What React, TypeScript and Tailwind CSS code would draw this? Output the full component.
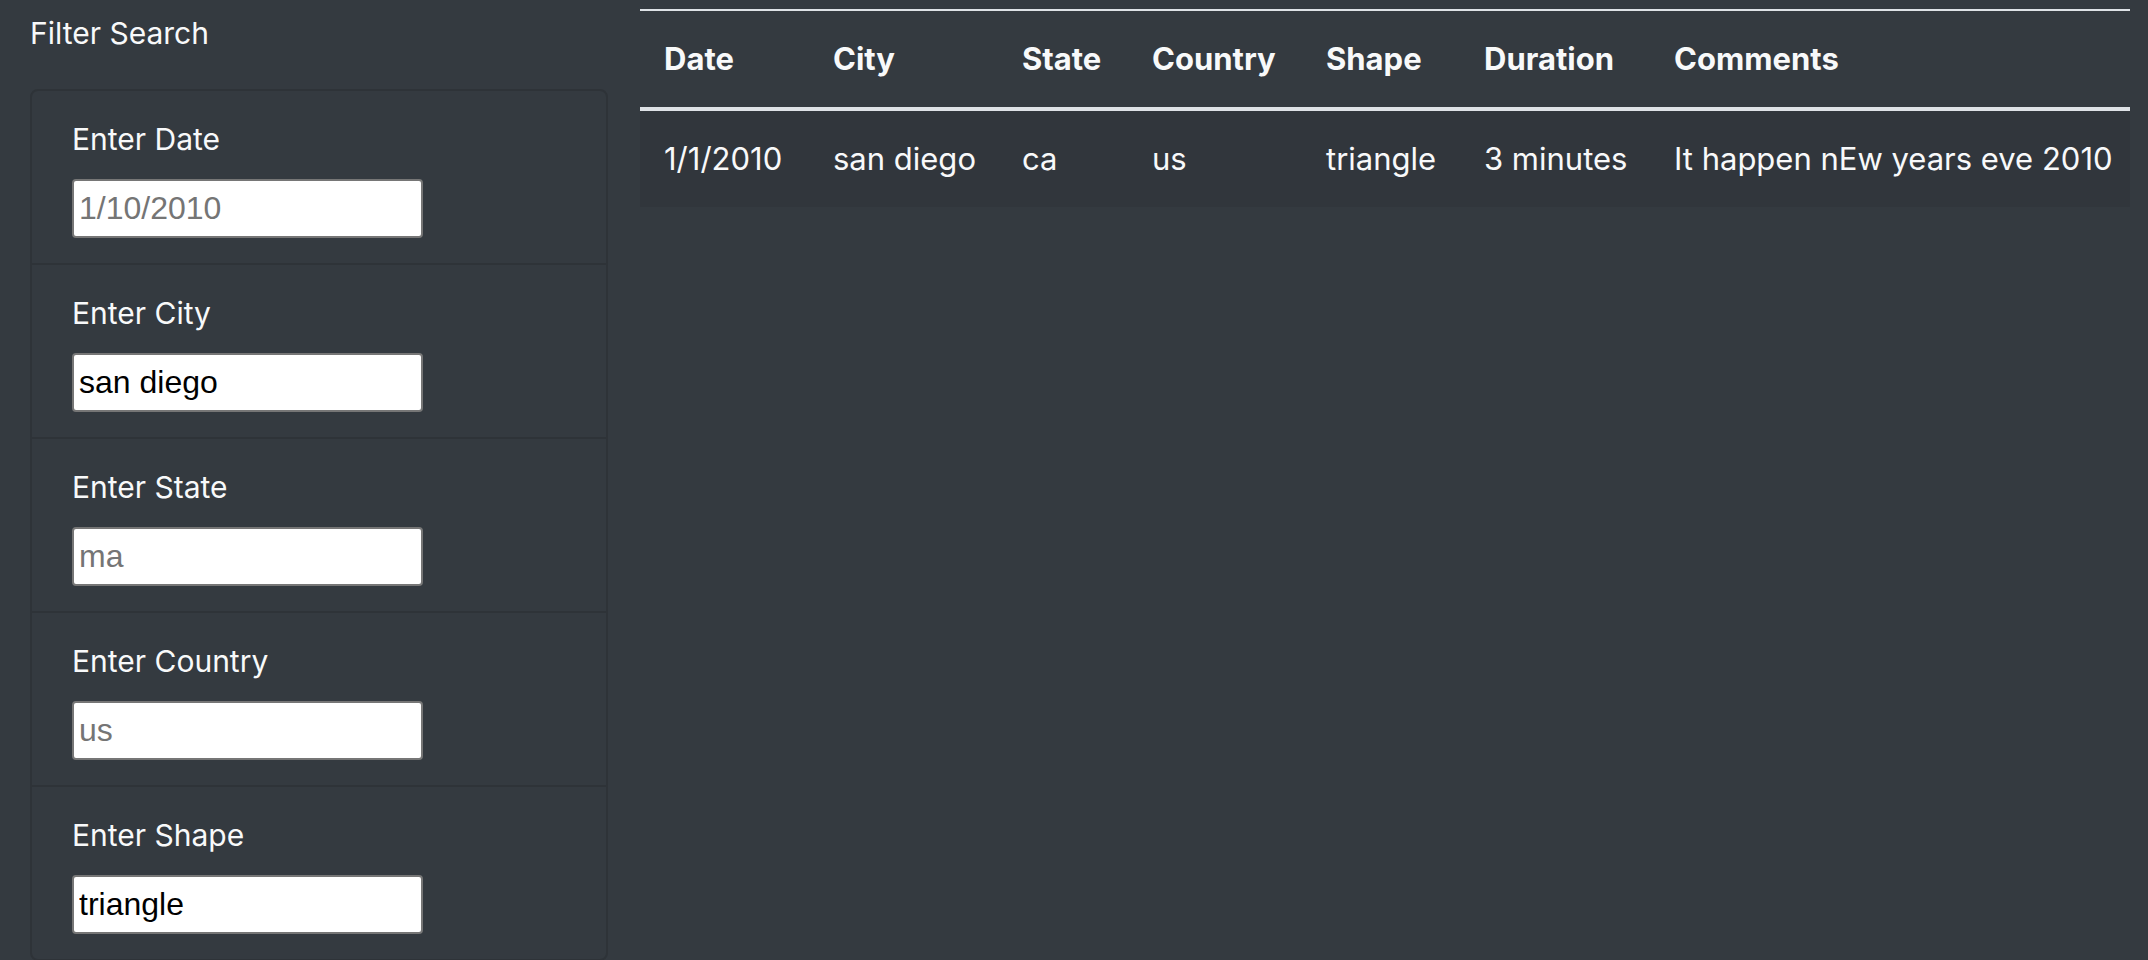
import React from 'react'

interface Filter {
  label: string
  placeholder?: string
  value?: string
}

const filters: Filter[] = [
  { label: 'Enter Date', placeholder: '1/10/2010' },
  { label: 'Enter City', value: 'san diego' },
  { label: 'Enter State', placeholder: 'ma' },
  { label: 'Enter Country', placeholder: 'us' },
  { label: 'Enter Shape', value: 'triangle' },
]

const columns = [
  { title: 'Date', width: 'w-[169px]' },
  { title: 'City', width: 'w-[189px]' },
  { title: 'State', width: 'w-[130px]' },
  { title: 'Country', width: 'w-[174px]' },
  { title: 'Shape', width: 'w-[158px]' },
  { title: 'Duration', width: 'w-[190px]' },
  { title: 'Comments', width: 'w-[480px]' },
]

const rows = [
  ['1/1/2010', 'san diego', 'ca', 'us', 'triangle', '3 minutes', 'It happen nEw years eve 2010'],
]

export default function App() {
  return (
    <div className="min-h-[960px] bg-[#343a40] text-[#f8f9fa] font-['Inter',sans-serif] text-[31px] leading-[48px]">
      <div className="flex items-start pl-[30px] pt-[9px]">
        {/* Filter sidebar */}
        <aside className="w-[578px] shrink-0">
          <h4 className="text-[30px] leading-[48px] font-normal">Filter Search</h4>
          <ul className="mt-[32px] border-2 border-[#2e3338] rounded-[8px] overflow-hidden">
            {filters.map((f, i) => (
              <li
                key={f.label}
                className={`px-[40px] pt-[24px] pb-[25px] ${i > 0 ? 'border-t-2 border-[#2e3338]' : ''}`}
              >
                <label className="block text-[30px] leading-[48px] mb-[16px]">{f.label}</label>
                <input
                  type="text"
                  readOnly
                  placeholder={f.placeholder}
                  defaultValue={f.value}
                  className="block w-[351px] h-[59px] bg-white border-2 border-[#767676] rounded-[4px] px-[5px] text-black text-[32px] font-['Liberation_Sans',Arial,sans-serif] placeholder:text-[#757575] outline-none"
                />
              </li>
            ))}
          </ul>
        </aside>

        {/* Results table */}
        <div className="ml-[32px] w-[1490px]">
          <table className="w-full table-fixed border-collapse text-left">
            <thead>
              <tr>
                {columns.map((c) => (
                  <th
                    key={c.title}
                    className={`${c.width} px-[24px] py-[24px] border-t-2 border-t-[#dee2e6] border-b-4 border-b-[#dee2e6] font-bold align-bottom whitespace-nowrap`}
                  >
                    {c.title}
                  </th>
                ))}
              </tr>
            </thead>
            <tbody>
              {rows.map((r, i) => (
                <tr key={i} className="bg-[#31363c]">
                  {r.map((cell, j) => (
                    <td key={j} className="px-[24px] py-[24px] whitespace-nowrap">
                      {cell}
                    </td>
                  ))}
                </tr>
              ))}
            </tbody>
          </table>
        </div>
      </div>
    </div>
  )
}
